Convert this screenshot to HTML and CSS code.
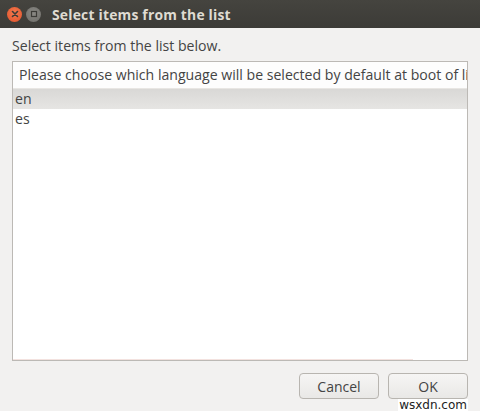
FILE: index.html
```html
<!DOCTYPE html>
<html>
<head>
<meta charset="utf-8">
<link rel="stylesheet" href="styles.css">
</head>
<body>
<div class="window">
  <div class="titlebar">
    <span class="btn-close"><svg width="14" height="14" viewBox="0 0 14 14"><path d="M4.5 4.5 L9.5 9.5 M9.5 4.5 L4.5 9.5" stroke="#3c3b37" stroke-width="1.6" stroke-linecap="round"/></svg></span>
    <span class="btn-min"><svg width="14" height="14" viewBox="0 0 14 14"><rect x="4.5" y="4.5" width="5" height="5" fill="none" stroke="#3c3b37" stroke-width="1.2"/></svg></span>
    <span class="title">Select items from the list</span>
  </div>
  <div class="content">
    <div class="label">Select items from the list below.</div>
    <div class="listbox">
      <div class="header">Please choose which language will be selected by default at boot of li</div>
      <div class="row selected">en</div>
      <div class="row">es</div>
      <div class="fill"></div>
      <div class="bottomline"></div>
    </div>
    <div class="buttons">
      <button class="btn">Cancel</button>
      <button class="btn">OK</button>
    </div>
  </div>
  <div class="watermark">wsxdn.com</div>
</div>
</body>
</html>
```
FILE: styles.css
```css
html, body { margin: 0; padding: 0; }
body { width: 480px; height: 411px; overflow: hidden; background: #f2f1f0; font-family: "Open Sans", "Noto Sans", sans-serif; color: #444444; }
.window { position: relative; width: 480px; height: 411px; display: flex; flex-direction: column; }
.titlebar { height: 28px; background: linear-gradient(#45443f, #3c3b37); display: flex; align-items: center; padding-left: 7px; box-sizing: border-box; }
.btn-close, .btn-min { width: 15px; height: 15px; border-radius: 50%; display: flex; align-items: center; justify-content: center; margin-right: 4px; }
.btn-close { background: radial-gradient(circle at 50% 40%, #f47a4e, #e0512a); }
.btn-min { background: radial-gradient(circle at 50% 40%, #8a8984, #6d6c68); }
.btn-close svg, .btn-min svg { width: 14px; height: 14px; }
.title { color: #dfdbd2; font-weight: bold; font-size: 13.9px; margin-left: 7px; letter-spacing: 0.2px; }
.content { flex: 1; display: flex; flex-direction: column; padding: 9px 12px 0 12px; }
.label { font-size: 14.1px; height: 17px; line-height: 17px; margin-bottom: 7px; }
.listbox { height: 300px; border: 1px solid #bcb9b5; background: #fff; display: flex; flex-direction: column; overflow: hidden; position: relative; box-sizing: border-box; }
.header { height: 27px; line-height: 26px; font-size: 14.1px; padding-left: 6px; white-space: nowrap; overflow: hidden; background: #fdfdfd; border-bottom: 1px solid #e8e6e3; box-sizing: border-box; }
.row { height: 20px; line-height: 19px; font-size: 14.1px; padding-left: 2px; }
.row.selected { background: linear-gradient(#d9d8d6, #e6e5e3); }
.fill { flex: 1; }
.bottomline { position: absolute; left: 0; bottom: 0; width: 400px; height: 1px; background: #f3e2df; }
.buttons { display: flex; justify-content: flex-end; gap: 9px; margin-top: 12px; }
.btn { width: 80px; height: 26px; border: 1px solid #b8b5b0; border-radius: 4px; background: linear-gradient(#f6f5f4, #e9e8e6); font-family: inherit; font-size: 14px; color: #444444; padding: 0; }
.watermark { position: absolute; right: 12px; bottom: 0; font-family: "DejaVu Sans", sans-serif; font-size: 12px; color: #222; background: #fff; line-height: 12px; padding: 0 1px; }
```
